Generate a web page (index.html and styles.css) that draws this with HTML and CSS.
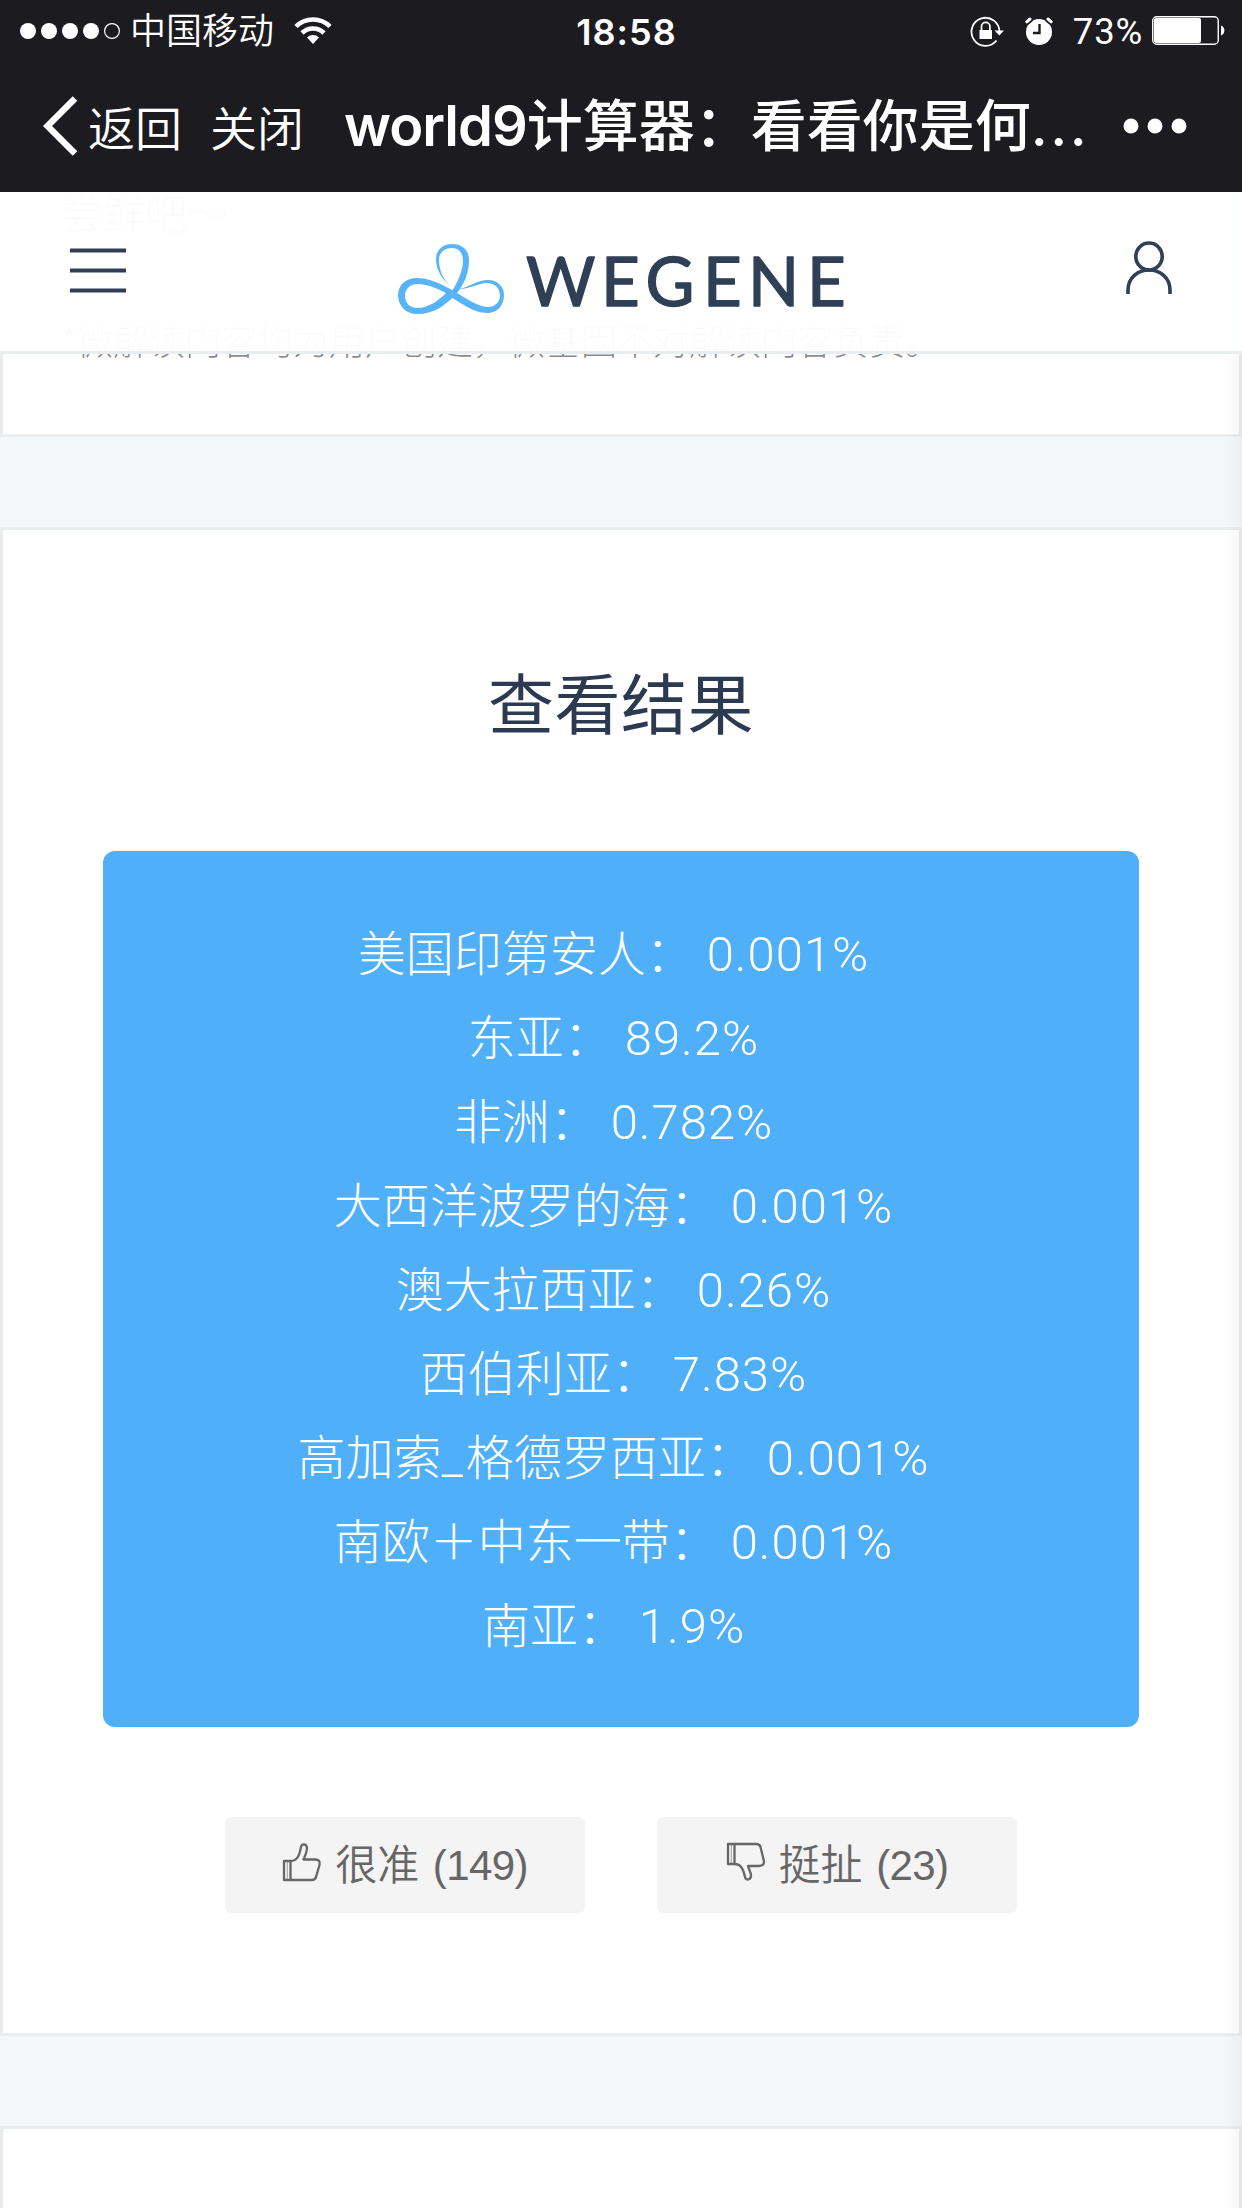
FILE: index.html
```html
<!DOCTYPE html>
<html lang="zh-CN">
<head>
<meta charset="utf-8">
<title>WeGene</title>
<link rel="stylesheet" href="styles.css">
</head>
<body>
<div class="chrome">
  <div class="status">
    <div class="status-left">
      <svg class="signal" width="102" height="20" viewBox="0 0 102 20"><g fill="#fff"><circle cx="8" cy="10" r="8"/><circle cx="29" cy="10" r="8"/><circle cx="50" cy="10" r="8"/><circle cx="71" cy="10" r="8"/></g><circle cx="92" cy="10" r="7.4" fill="none" stroke="#fff" stroke-width="1.2"/></svg>
      <span class="carrier">中国移动</span>
      <svg class="wifi" width="38" height="28" viewBox="0 0 38 28"><g fill="none" stroke="#fff" stroke-width="4.6"><path d="M2 9.500a24 24 0 0 1 34 0"/><path d="M8 16a15.600 15.600 0 0 1 22 0"/></g><path d="M19 27l-6-6.500a8.500 8.500 0 0 1 12 0z" fill="#fff"/></svg>
    </div>
    <span class="time">18:58</span>
    <div class="status-right">
      <svg class="lock" width="36" height="32" viewBox="0 0 36 32"><path d="M26.500 25.500A14 14 0 1 1 29.500 17" fill="none" stroke="#fff" stroke-width="1.8"/><path d="M24.500 15.500h9.500l-4.700 5z" fill="#fff"/><rect x="9.500" y="15" width="12.500" height="9" fill="#fff"/><path d="M11.500 15v-3.500a4.200 4.200 0 0 1 8.400 0V15" fill="none" stroke="#fff" stroke-width="1.8"/></svg>
      <svg class="alarm" width="28" height="28" viewBox="0 0 28 28"><circle cx="14" cy="15" r="13" fill="#fff"/><path d="M1.500 5.500L6 1.800M22 1.800l4.500 3.700" stroke="#1c1b20" stroke-width="6"/><path d="M1.800 4.800L5 2M23 2l3.200 2.800" stroke="#fff" stroke-width="3" stroke-linecap="round"/><path d="M14.500 7v9H8" fill="none" stroke="#1c1b20" stroke-width="2.400"/></svg>
      <span class="percent">73%</span>
      <svg class="battery" width="74" height="30" viewBox="0 0 74 30"><rect x=".75" y=".75" width="65.500" height="27.500" rx="4" fill="none" stroke="#fff" stroke-width="1.400"/><rect x="2" y="2" width="47" height="25" rx="2" fill="#fff"/><path d="M69 9.500c4.500 1.500 4.500 8.500 0 10z" fill="#fff"/></svg>
    </div>
  </div>
  <div class="nav">
    <svg class="back" width="35" height="60" viewBox="0 0 35 60"><path d="M32 2.500L4.500 30 32 57.500" fill="none" stroke="#fff" stroke-width="6.500"/></svg>
    <span class="nav-link nav-back">返回</span>
    <span class="nav-link nav-close">关闭</span>
    <span class="nav-title"><span class="latin">world9</span>计算器：看看你是何<span class="dots">...</span></span>
    <svg class="more" width="64" height="16" viewBox="0 0 64 16" fill="#fff"><circle cx="8" cy="8" r="7.500"/><circle cx="32" cy="8" r="7.500"/><circle cx="56" cy="8" r="7.500"/></svg>
  </div>
</div>

<div class="page">
  <header class="site-header">
    <svg class="menu" width="56" height="46" viewBox="0 0 56 46" stroke="#2f4056" stroke-width="4"><path d="M0 2.500h56M0 22.500h56M0 42.500h56"/></svg>
    <svg class="logo" width="460" height="80" viewBox="0 0 460 80">
      <path fill="#58b3f9" fill-rule="nonzero" d="M52 43C44 36 38 27 38 16C38 7 45 1 54 1C64 1 71 7 71 17C71 29 67 40 59 50C47 63 36 71 19 71C8 71 0 63 0 52C0 42 8 35 19 35C37 35 55 48 69 56C76 60 83 64 90 64C97 64 102 59 102 53C102 45 97 40 89 40C80 40 73 46 61 46C72 44 79 37 90 37C99 37 106 43 106 52C106 63 99 70 89 70C75 70 62 59 51 53C55 47 65 31 65 18C65 10 61 5 54 5C46 5 41 10 41 17C41 27 45 36 52 43ZM48 50C38 45 30 41 19 41C12 41 7 46 7 53C7 60 12 65 19 65C31 65 41 57 48 50Z"/>
      <g class="wordmark"><text y="62.500"><tspan x="128">W</tspan><tspan x="203">E</tspan><tspan x="247.500">G</tspan><tspan x="305">E</tspan><tspan x="350">N</tspan><tspan x="409">E</tspan></text></g>
    </svg>
    <svg class="user" width="46" height="54" viewBox="0 0 46 54" fill="none" stroke="#2f4056" stroke-width="3.600"><ellipse cx="23" cy="15.500" rx="13.200" ry="13.500"/><path d="M2 53v-4C2 36.500 12 29 23 29s21 7.500 21 20v4"/></svg>
  </header>

  <section class="card card-intro">
    <p class="intro">尝鲜吧～</p>
    <p class="notice">*微解读内容均为用户创建，微基因不对解读内容负责。</p>
  </section>

  <section class="card card-result">
    <h2>查看结果</h2>
    <div class="result">
      <p>美国印第安人：<span>&nbsp;0.001%&nbsp;</span></p>
      <p>东亚：<span>&nbsp;89.2%&nbsp;</span></p>
      <p>非洲：<span>&nbsp;0.782%&nbsp;</span></p>
      <p>大西洋波罗的海：<span>&nbsp;0.001%&nbsp;</span></p>
      <p>澳大拉西亚：<span>&nbsp;0.26%&nbsp;</span></p>
      <p>西伯利亚：<span>&nbsp;7.83%&nbsp;</span></p>
      <p>高加索<span class="underscore">_</span>格德罗西亚：<span>&nbsp;0.001%&nbsp;</span></p>
      <p>南欧＋中东一带：<span>&nbsp;0.001%&nbsp;</span></p>
      <p>南亚：<span>&nbsp;1.9%&nbsp;</span></p>
    </div>
    <div class="votes">
      <button class="vote"><svg width="40" height="40" viewBox="0 0 40 40" fill="none" stroke="#666" stroke-width="2.300" stroke-linejoin="round"><path d="M2 19h6.500v19H2z"/><path d="M5.300 19v19" stroke-width=".6"/><path d="M8.500 19c7 0 9-6 10.500-14 .8-4 6-3.500 6 1.500 0 4-2 7-3.500 11H33c4 0 5.500 2 4.500 5.500L34 35c-.7 2-2 3-4 3H8.500"/></svg><span>很准 <b>(149)</b></span></button>
      <button class="vote"><svg width="40" height="40" viewBox="0 0 40 40" fill="none" stroke="#666" stroke-width="2.300" stroke-linejoin="round"><path d="M2 2h6.500v20H2z"/><path d="M5.300 2v20" stroke-width=".6"/><path d="M8.500 22c7 0 9 6 10.500 13 .8 4 6 3 6-1.500 0-3.500-2-5.500-3-9.500h11c4 0 5.500-2 4.800-5.500L34.500 5c-.7-2-2-3-4-3h-22"/></svg><span>挺扯 <b>(23)</b></span></button>
    </div>
  </section>

  <section class="card card-next"></section>
</div>
</body>
</html>
```
FILE: styles.css
```css
* { box-sizing: border-box; margin: 0; padding: 0; }

body {
  width: 1242px;
  height: 2208px;
  overflow: hidden;
  display: flex;
  flex-direction: column;
  background: #f3f7fa;
  font-family: "Liberation Sans", "Noto Sans CJK SC", sans-serif;
}

svg { display: block; flex: none; }

.chrome {
  height: 192px;
  flex: none;
  background: #1c1b20;
  color: #fff;
}

.status {
  height: 60px;
  padding: 0 16px 0 20px;
  display: grid;
  grid-template-columns: 1fr auto 1fr;
  align-items: center;
  font-family: Inter, "Noto Sans CJK SC", sans-serif;
}

.status-left, .status-right { display: flex; align-items: center; }
.status-right { justify-content: flex-end; }
.carrier { margin-left: 8px; font-size: 36px; line-height: 60px; font-weight: 350; height: 60px; }
.wifi { margin-left: 20px; }
.time { font-size: 36px; font-weight: 600; letter-spacing: 1px; line-height: 60px; padding: 1px 0 0 7px; }
.alarm { margin-left: 19px; }
.percent { margin-left: 20px; font-size: 36.500px; letter-spacing: .8px; line-height: 60px; font-family: Roboto, sans-serif; padding-top: 2px; }
.battery { margin-left: 9px; }

.nav {
  height: 132px;
  padding: 0 0 0 43px;
  display: flex;
  align-items: center;
}

.nav-link { font: 350 47px/128px "Noto Sans CJK SC", sans-serif; white-space: nowrap; }
.nav-back { margin-left: 10px; }
.nav-close { margin-left: 28px; }
.nav-title {
  width: 744px;
  margin-left: 40px;
  font: 500 56px/132px Inter, "Noto Sans CJK SC", sans-serif;
  white-space: nowrap;
}
.nav-title .latin { font-weight: 600; letter-spacing: -1px; }
.nav-title .dots { letter-spacing: 2.500px; }
.more { margin-left: 35px; }

.page {
  position: relative;
  flex: 1;
  overflow: hidden;
}

/* soft shade along the right edge of the scroll view */
.page::after {
  content: "";
  position: absolute;
  top: 0;
  right: 0;
  bottom: 0;
  width: 18px;
  background: linear-gradient(90deg, rgba(0,0,0,0), rgba(0,0,0,.03));
}

.site-header {
  position: absolute;
  z-index: 1;
  top: 0;
  left: 0;
  width: 100%;
  height: 162px;
  padding: 49px 70px 0;
  display: flex;
  justify-content: space-between;
  background: rgba(255,255,255,.97);
  border-bottom: 3px solid #e9edf0;
}

.menu { margin-top: 7px; }
.logo { margin: 2px 0 0 4px; }

.wordmark {
  font: 400 67px Lato, sans-serif;
  fill: #2f4056;
  stroke: #2f4056;
  stroke-width: 1.4;
  stroke-linejoin: round;
}

.card {
  background: #fff;
  border: 3px solid #e9edf0;
}

.card-intro {
  height: 245px;
  border-top: 0;
  padding: 0 58px;
  color: #8c8c8c;
  font-family: "Noto Sans CJK SC", sans-serif;
  font-weight: 300;
}
.intro { height: 48px; font-size: 42px; line-height: 40px; }
.notice { margin-top: 75px; font-size: 36px; line-height: 48px; white-space: nowrap; }

.card-result {
  height: 1509px;
  margin-top: 90px;
  padding: 0 100px;
}

.card-result h2 {
  padding-top: 120px;
  font: 400 66px/100px "Noto Sans CJK SC", sans-serif;
  letter-spacing: .5px;
  text-align: center;
  color: #2b3a50;
}

.result {
  height: 876px;
  margin-top: 101px;
  padding: 57px 2px 63px 0;
  border-radius: 12px;
  background: #4faff8;
  color: #fff;
  text-align: center;
}

.result p {
  height: 84px;
  font: 300 48px/84px "Noto Sans CJK SC", sans-serif;
  white-space: nowrap;
}

.result span { font-family: Roboto, sans-serif; font-size: 49px; letter-spacing: 1px; }
.result .underscore { letter-spacing: 3px; }

.votes {
  margin-top: 90px;
  display: flex;
  justify-content: center;
  gap: 72px;
}

.vote {
  width: 360px;
  height: 96px;
  display: flex;
  align-items: center;
  justify-content: center;
  gap: 13px;
  border: 0;
  border-radius: 6px;
  background: #f4f4f4;
  color: #666;
  font: 350 42px/98px "Liberation Sans", "Noto Sans CJK SC", sans-serif;
}

.vote span { word-spacing: 2px; padding-top: 1px; }
.vote b { font-weight: 400; letter-spacing: -.6px; }
.vote svg { margin-top: -6px; }

.card-next { height: 120px; margin-top: 90px; }
```
